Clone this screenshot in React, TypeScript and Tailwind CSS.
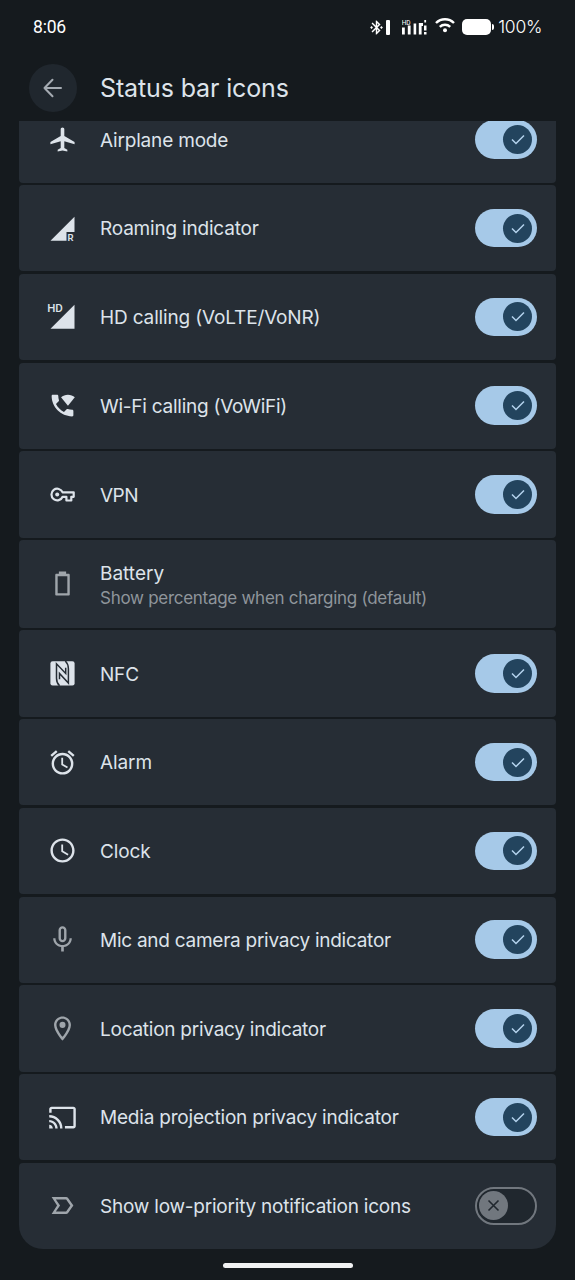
import type { ReactNode } from "react";
import { useState } from "react";
import {
  MdAirplanemodeActive,
  MdAccessAlarm,
  MdAccessTime,
  MdMicNone,
  MdBluetoothConnected,
  MdOutlineLocationOn,
  MdCast,
  MdLabelImportantOutline,
} from "react-icons/md";

interface Setting {
  id: string;
  label: string;
  labelClass?: string;
  icon: ReactNode;
  dim?: boolean;
  summary?: string;
  on?: boolean;
}

const RoamingIcon = () => (
  <svg width="29" height="29" viewBox="0 0 29 29" fill="currentColor">
    <path d="M26.5 2.8V18H18.5V26.8H2.5Z" />
    <text x="19.6" y="26.8" fontSize="9.5" fontWeight="600" fontFamily="Roboto, sans-serif">
      R
    </text>
  </svg>
);

const HdIcon = () => (
  <svg width="29" height="29" viewBox="0 0 29 29" fill="currentColor" className="overflow-visible">
    <path d="M26.5 2.8V26.8H2.5Z" />
    <text x="-0.8" y="10" fontSize="11.5" fontWeight="500" fontFamily="Roboto, sans-serif">
      HD
    </text>
  </svg>
);

const WifiCallIcon = () => (
  <svg width="29" height="29" viewBox="0 0 24 24" fill="currentColor">
    <path d="M20 15.5c-1.25 0-2.45-.2-3.57-.57-.35-.11-.74-.03-1.02.24l-2.2 2.2c-2.83-1.44-5.15-3.75-6.59-6.58l2.2-2.21c.28-.27.36-.66.25-1.01C8.7 6.45 8.5 5.25 8.5 4c0-.55-.45-1-1-1H4c-.55 0-1 .45-1 1 0 9.39 7.61 17 17 17 .55 0 1-.45 1-1v-3.5c0-.55-.45-1-1-1z" />
    <path d="M22.2 5.2C20.7 3.7 18.7 3 16.5 3S12.3 3.7 10.8 5.2L16.5 12.2z" />
  </svg>
);

const KeyIcon = () => (
  <svg width="29" height="29" viewBox="0 0 29 29" fill="none" stroke="currentColor" strokeWidth="2.2">
    <path d="M14.6 12.3H25.700V16.800H23.300V20.500H18.400V16.800H14.600A5.800 5.800 0 1 1 14.600 12.300Z" strokeLinejoin="round" />
    <circle cx="9.2" cy="14.5" r="2" fill="currentColor" stroke="none" />
  </svg>
);

const BatteryIcon = () => (
  <svg width="29" height="29" viewBox="0 0 24 24" fill="currentColor">
    <path d="M17 4h-2V2H9v2H7c-.6 0-1 .4-1 1v16c0 .6.4 1 1 1h10c.6 0 1-.4 1-1V5c0-.6-.4-1-1-1zm-1 16H8V6h8v14z" />
  </svg>
);

const NfcIcon = () => (
  <svg width="29" height="29" viewBox="0 0 29 29" fill="none">
    <rect x="2.4" y="2.2" width="24.2" height="24.2" rx="2.2" fill="currentColor" />
    <g stroke="#262d35" strokeWidth="1.5">
      <path d="M11.6 26.8C9.2 24.4 8.5 22.4 8.5 19.2V4.8L17.7 14.4V8.7" />
      <path d="M17.3 2C19.8 4.4 20.4 6.4 20.4 9.7V24L11.5 14.4V20.2" />
    </g>
  </svg>
);

const SETTINGS: Setting[] = [
  { id: "airplane", label: "Airplane mode", labelClass: "tracking-[-0.18px]", icon: <MdAirplanemodeActive />, on: true },
  { id: "roaming", label: "Roaming indicator", labelClass: "tracking-[-0.2px]", icon: <RoamingIcon />, on: true },
  { id: "hd", label: "HD calling (VoLTE/VoNR)", labelClass: "tracking-[-0.15px]", icon: <HdIcon />, on: true },
  { id: "vowifi", label: "Wi-Fi calling (VoWiFi)", labelClass: "tracking-[-0.25px]", icon: <WifiCallIcon />, on: true },
  { id: "vpn", label: "VPN", labelClass: "tracking-[-0.5px]", icon: <KeyIcon />, on: true },
  {
    id: "battery",
    label: "Battery",
    icon: <BatteryIcon />,
    dim: true,
    summary: "Show percentage when charging (default)",
  },
  { id: "nfc", label: "NFC", labelClass: "tracking-[-0.2px]", icon: <NfcIcon />, on: true },
  { id: "alarm", label: "Alarm", labelClass: "tracking-[-0.1px]", icon: <MdAccessAlarm />, on: true },
  { id: "clock", label: "Clock", labelClass: "tracking-[-0.1px]", icon: <MdAccessTime />, on: true },
  { id: "mic", label: "Mic and camera privacy indicator", labelClass: "tracking-[-0.26px]", icon: <MdMicNone className="scale-110" />, dim: true, on: true },
  { id: "location", label: "Location privacy indicator", labelClass: "tracking-[-0.25px]", icon: <MdOutlineLocationOn />, dim: true, on: true },
  { id: "cast", label: "Media projection privacy indicator", labelClass: "tracking-[-0.2px]", icon: <MdCast />, on: true },
  { id: "lowpri", label: "Show low-priority notification icons", labelClass: "tracking-[-0.22px]", icon: <MdLabelImportantOutline />, dim: true, on: false },
];

function Switch({ on, onToggle, label }: { on: boolean; onToggle: () => void; label: string }) {
  if (!on) {
    return (
      <button
        role="switch"
        aria-checked={false}
        aria-label={label}
        onClick={onToggle}
        className="flex h-[38.6px] w-[62.4px] items-center rounded-full border-2 border-[#71777e] bg-[#20272e] pl-[2px]"
      >
        <span className="flex size-[29px] items-center justify-center rounded-full bg-[#71777e] text-[#20272e]">
          <svg width="13" height="13" viewBox="0 0 13 13" stroke="currentColor" strokeWidth="1.6">
            <path d="M1.5 1.5l10 10M11.5 1.5l-10 10" />
          </svg>
        </span>
      </button>
    );
  }
  return (
    <button
      role="switch"
      aria-checked
      aria-label={label}
      onClick={onToggle}
      className="flex h-[38.6px] w-[62.4px] items-center justify-end rounded-full bg-[#a6c9e8] pr-[4.6px]"
    >
      <span className="flex size-[29px] items-center justify-center rounded-full bg-[#23445e] text-[#b4d3ee]">
        <svg width="14" height="11" viewBox="0 0 14 11" fill="none" stroke="currentColor" strokeWidth="1.5">
          <path d="M1 5.5l4 4 8-8" />
        </svg>
      </span>
    </button>
  );
}

function StatusBar() {
  return (
    <div className="flex h-[54px] shrink-0 items-center px-[33px] text-white">
      <span className="flex-1 pt-px font-[Roboto] text-[17.5px] leading-none tracking-[-0.2px]">8:06</span>
      <MdBluetoothConnected className="size-[17px]" />
      <span className="ml-px h-[15px] w-[4px] rounded-[1px] bg-white" />
      <svg className="ml-[12px]" width="25" height="16" viewBox="0 0 25 16" fill="currentColor">
        <text x="-0.3" y="5.8" fontSize="6.5" fontFamily="Roboto, sans-serif">
          HD
        </text>
        <path d="M0 8.5h2.8V15.5H0zM5.8 6.5h2.8v9H5.8zM11.6 4.5h2.6v11h-2.6zM16.8 4h2.8v11.5h-2.8zM19.6 4h1.4v3h-1.4zM22 6.5h2.5v5H22zM22 13h2.5v2.5H22zM22.3 1h1.8v2.5h-1.8z" />
      </svg>
      <svg className="mb-[4px] ml-[8px]" width="20" height="16" viewBox="0 0 20 16" fill="none" stroke="currentColor" strokeWidth="2.4">
        <path d="M1 6C6 .9 14 .9 19 6M4.8 9.8C7.7 7 12.3 7 15.2 9.8" />
        <circle cx="10" cy="13.2" r="2" fill="currentColor" stroke="none" />
      </svg>
      <span className="ml-[7px] h-[16px] w-[29px] rounded-[5px] bg-white" />
      <span className="ml-px h-[6px] w-[2px] rounded-r bg-white" />
      <span className="ml-[4px] font-[Inter] text-[17.5px] font-light leading-none tracking-[-0.3px]">100%</span>
    </div>
  );
}

export default function App() {
  const [enabled, setEnabled] = useState<Record<string, boolean>>(
    Object.fromEntries(SETTINGS.map((s) => [s.id, !!s.on])),
  );

  const toggle = (id: string) => setEnabled((prev) => ({ ...prev, [id]: !prev[id] }));

  return (
    <div className="flex h-[1280px] w-[575px] flex-col overflow-hidden bg-[#151a1e] font-[Inter,sans-serif] text-[#dde3ea]">
      <StatusBar />
      <header className="flex h-[67.4px] shrink-0 items-center pl-[28.5px]">
        <button aria-label="Back" className="flex size-[48px] items-center justify-center rounded-full bg-[#20272e] text-[#a5abb2]">
          <svg width="20" height="20" viewBox="0 0 20 20" fill="none" stroke="currentColor" strokeWidth="2" strokeLinecap="round" strokeLinejoin="round">
            <path d="M18 10H1.5M9.5 1.8L1.5 10l8 8.2" />
          </svg>
        </button>
        <h1 className="pl-[23.5px] pt-px text-[25px] leading-none tracking-[-0.13px]">Status bar icons</h1>
      </header>

      <main className="mx-[19px] shrink-0 overflow-hidden rounded-b-[24px]">
        <ul className="-mt-[25.1px] flex flex-col gap-[2.5px]">
          {SETTINGS.map((s) => (
            <li
              key={s.id}
              className={`flex items-center rounded-[4px] bg-[#262d35] pl-[29px] pr-[19px] ${s.summary ? "h-[87.75px]" : "h-[86.25px]"}`}
            >
              <span className={`text-[29px] ${s.dim ? "text-[#9fa5ab]" : "text-[#dde3ea]"}`}>{s.icon}</span>
              <div className="min-w-0 flex-1 pl-[23px] pt-[2.4px]">
                <p className={`whitespace-nowrap text-[19px] leading-[26px] ${s.labelClass ?? ""}`}>{s.label}</p>
                {s.summary && (
                  <p className="whitespace-nowrap text-[17px] leading-[23px] tracking-[-0.28px] text-[#8f959b]">{s.summary}</p>
                )}
              </div>
              {!s.summary && <Switch on={enabled[s.id]} onToggle={() => toggle(s.id)} label={s.label} />}
            </li>
          ))}
        </ul>
      </main>

      <div className="flex flex-1 items-center justify-center pt-[2px]">
        <span className="h-[5px] w-[130px] rounded-full bg-[#f1f2f3]" />
      </div>
    </div>
  );
}
